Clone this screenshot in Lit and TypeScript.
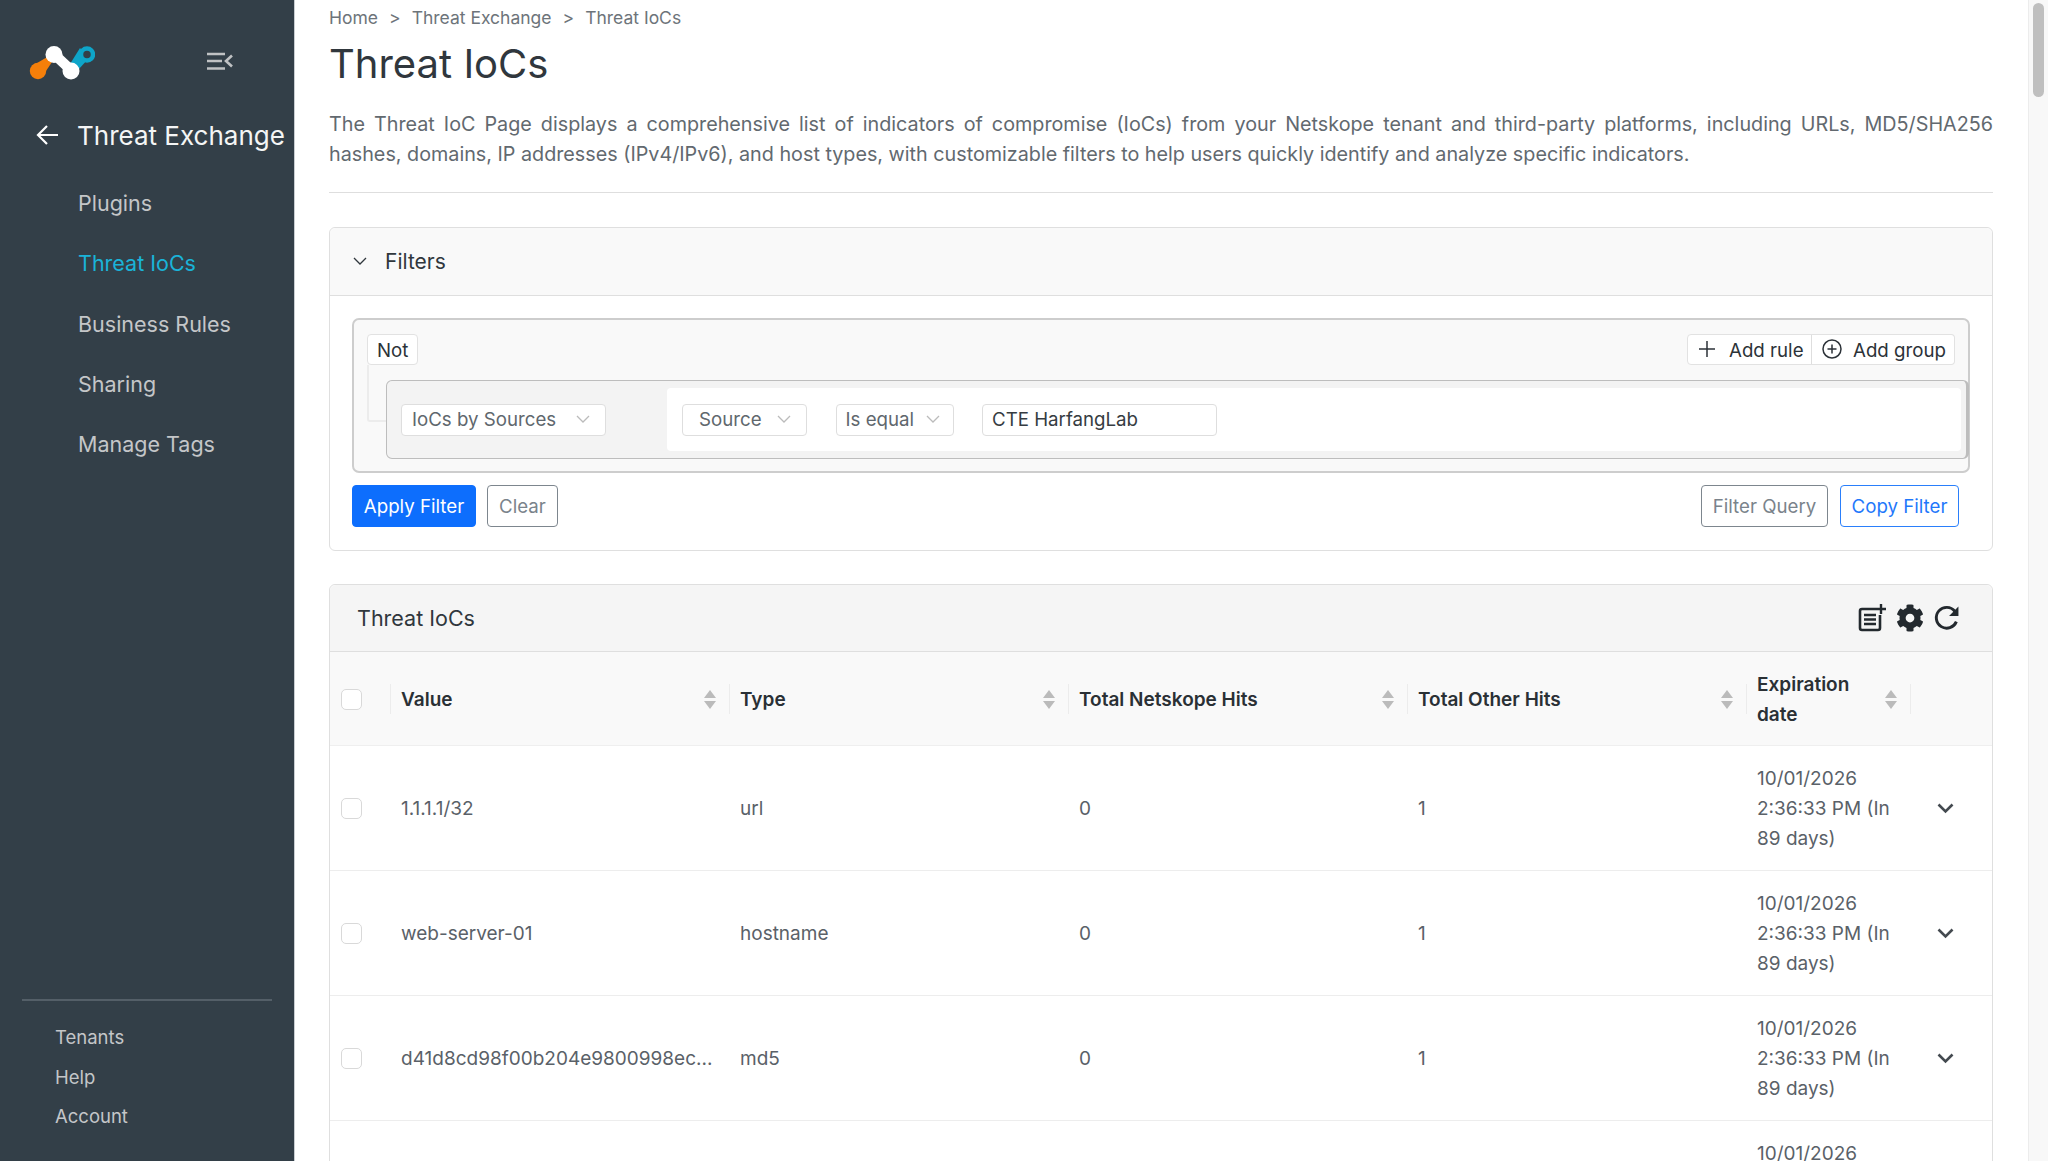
import { LitElement, html, css, svg } from 'lit';
import { customElement } from 'lit/decorators.js';

const NAV = ['Plugins', 'Threat IoCs', 'Business Rules', 'Sharing', 'Manage Tags'];
const FOOT = ['Tenants', 'Help', 'Account'];
const ROWS = [
  { value: '1.1.1.1/32', type: 'url' },
  { value: 'web-server-01', type: 'hostname' },
  { value: 'd41d8cd98f00b204e9800998ec...', type: 'md5' },
  { value: '', type: '' },
];
const COLS = ['Value', 'Type', 'Total Netskope Hits', 'Total Other Hits', 'Expiration date'];

const chevron = svg`<path d="M1 1l6 6 6-6" fill="none" stroke="currentColor" stroke-width="1.3"/>`;
const sortIcon = html`<svg class="sort" width="12" height="20" viewBox="0 0 12 20">
  <path d="M6 0l6 8H0z M0 11h12l-6 8z" fill="#bbb"/>
</svg>`;

@customElement('app-root')
export class AppRoot extends LitElement {
  static styles = css`
    :host {
      display: block;
      height: 1161px;
      overflow: hidden;
      font-family: Inter, 'Noto Sans', sans-serif;
      font-size: 20px;
      color: #5a6168;
    }
    .page { display: flex; height: 1161px; }

    .side {
      width: 295px;
      flex: none;
      box-sizing: border-box;
      background: #333f48;
      border-right: 1px solid #c9ced2;
      display: flex;
      flex-direction: column;
      color: #c4c6c8;
    }
    .brand { display: flex; align-items: center; height: 122px; padding-left: 29px; flex: none; }
    .brand .logo { margin-top: 4px; }
    .brand .toggle { margin-left: 112px; }
    .section { display: flex; align-items: center; height: 26px; padding-left: 36px; color: #f4f5f5; font-size: 26px; white-space: nowrap; }
    .section svg { margin-right: 19px; flex: none; }
    .nav { margin-top: 25px; padding-left: 78px; font-size: 21.5px; }
    .nav div { height: 60.3px; line-height: 60.3px; }
    .nav .on { color: #1ab3d8; }
    .foot { margin: auto 0 0 22px; width: 250px; box-sizing: border-box; border-top: 2px solid #545f68; padding: 17px 0 24px 33px; font-size: 18.5px; }
    .foot div { height: 39.7px; line-height: 39.7px; }

    .main { flex: 1; min-width: 0; padding: 0 35px 0 34px; overflow: hidden; }
    .crumbs { display: flex; gap: 11px; height: 36px; line-height: 36px; font-size: 17.5px; color: #6d747a; }
    h1 { margin: 4px 0 0; font-size: 40px; line-height: 48px; font-weight: 400; color: #30373d; }
    .intro { margin: 21px 0 0; padding-bottom: 23px; border-bottom: 1px solid #dedede; font-size: 19.75px; line-height: 30px; text-align: justify; color: #62696f; }

    .card { border: 1px solid #dfdfdf; border-radius: 6px; margin-top: 33px; background: #fff; }
    .filters { margin-top: 34px; }
    .card-head { display: flex; align-items: center; height: 67px; background: #f9f9f9; border-bottom: 1px solid #dfdfdf; border-radius: 6px 6px 0 0; color: #30373d; font-size: 21px; }
    .filters .card-head { padding-left: 23px; gap: 18px; }
    .filters .card-body { padding: 22px 22px 23px; }

    .box { position: relative; border: 2px solid #cdcdcd; border-radius: 7px; background: #f9f9f9; padding: 14px 0 12px 32px; }
    .box-top { display: flex; justify-content: space-between; align-items: center; height: 31px; margin-left: -19px; padding-right: 13px; }
    .tag { display: flex; align-items: center; background: #fff; border: 1px solid #e2e2e2; border-radius: 4px; height: 31px; box-sizing: border-box; padding: 1px 9px 0; color: #2c3238; font-size: 18.7px; white-space: nowrap; }
    .tag-group { display: flex; }
    .tag-group .tag svg { margin-top: -3px; flex: none; }
    .tag-group .tag:first-child { border-radius: 4px 0 0 4px; width: 125px; padding-left: 11px; gap: 14px; }
    .tag-group .tag:last-child { border-left: 1px solid #dedede; margin-left: -1px; border-radius: 0 4px 4px 0; width: 144px; padding-left: 10px; gap: 11px; }
    .link { position: absolute; left: 13px; top: 45px; width: 18px; height: 55px; border-left: 2px solid #ececec; border-bottom: 2px solid #ececec; border-radius: 0 0 0 3px; }
    .rule { position: relative; margin: 15px -1px 0 0; height: 79px; box-sizing: border-box; display: flex; align-items: center; background: #f3f3f3; border: 1.5px solid #bdbdbd; border-right-width: 3px; border-radius: 6px; padding: 0 5px 0 14px; }
    .select { display: flex; align-items: center; justify-content: space-between; flex: none; height: 32px; box-sizing: border-box; background: #fff; border: 1px solid #dedede; border-radius: 4px; font-size: 18.7px; color: #60676d; white-space: nowrap; }
    .select svg { color: #bbb; flex: none; }
    .rule-first { width: 205px; padding: 0 15px 0 10px; }
    .rule-body { flex: 1; margin-left: 61px; height: 63px; display: flex; align-items: center; background: #fff; border-radius: 4px; padding-left: 15px; gap: 28.5px; }
    .s-source { width: 125px; padding: 0 15px 0 16px; }
    .s-equal { width: 118px; padding: 0 13px 0 9px; }
    .s-input { width: 235px; height: 32px; box-sizing: border-box; border: 1px solid #dedede; border-radius: 4px; padding-left: 9px; display: flex; align-items: center; color: #363c42; font-size: 18.7px; white-space: nowrap; }

    .actions { display: flex; justify-content: space-between; margin-top: 12px; padding-right: 11px; }
    .actions > div { display: flex; }
    .btn { display: flex; align-items: center; justify-content: center; height: 42px; box-sizing: border-box; border-radius: 4px; border: 1.5px solid #7d868e; color: #7a838b; font-size: 18.7px; background: #fff; white-space: nowrap; }
    .btn.apply { width: 124px; background: #0d6efd; border-color: #0d6efd; color: #fff; margin-right: 11px; }
    .btn.clear { width: 71px; }
    .btn.query { width: 127px; margin-right: 12px; }
    .btn.copy { width: 119px; border-color: #2a7ffb; color: #1f78fb; }

    .iocs .card-head { height: 66px; background: #f5f5f5; justify-content: space-between; padding: 0 32px 0 27px; font-size: 21.5px; }
    .tools { display: flex; align-items: center; gap: 10px; color: #23292e; }
    .grid { display: grid; grid-template-columns: 60px 339px 339px 339px 339px 164px 82px; }
    .th { position: relative; display: flex; align-items: center; height: 94px; box-sizing: border-box; background: #f9f9f9; border-bottom: 1px solid #efefef; padding: 2px 11px 0; font-weight: 600; font-size: 19px; line-height: 30px; color: #2a3035; }
    .th .label { flex: 1; }
    .th .sort { flex: none; margin-right: 2px; }
    .th:not(:first-child)::before { content: ''; position: absolute; left: 0; top: 32px; height: 30px; border-left: 1px solid #ececec; }
    .td { display: flex; align-items: center; height: 125px; box-sizing: border-box; border-bottom: 1px solid #ededed; padding: 1px 11px 0; font-size: 19px; line-height: 30px; white-space: nowrap; }
    .td.date { white-space: normal; align-items: flex-start; padding-top: 18px; padding-right: 4px; }
    .td.more { justify-content: flex-start; padding-left: 27px; color: #444a50; }
    .check { width: 21px; height: 21px; box-sizing: border-box; border: 1px solid #d9d9d9; border-radius: 5px; background: #fff; }

    .scroll { width: 20px; flex: none; box-sizing: border-box; background: #f8f8f8; border-left: 1px solid #ececec; padding: 3px 0 0 4px; }
    .thumb { width: 11px; height: 94px; border-radius: 6px; background: #bfbfbf; }
  `;

  render() {
    return html`
      <div class="page">
        <aside class="side">
          <div class="brand">
            <svg class="logo" width="66" height="34" viewBox="0 0 66 34">
              <path d="M3 20L20 10L23 16L13 31z" fill="#f57f0a"/>
              <circle cx="9" cy="25" r="8.200" fill="#f57f0a"/>
              <path d="M51 2L60 12L49 24L41 18z" fill="#0ea5c9"/>
              <circle cx="58" cy="8.500" r="6" fill="#333f48" stroke="#0ea5c9" stroke-width="4.500"/>
              <path d="M26 9L43 25" stroke="#fff" stroke-width="10"/>
              <circle cx="25" cy="8.500" r="8.500" fill="#fff"/>
              <circle cx="42" cy="25" r="8.500" fill="#fff"/>
            </svg>
            <svg class="toggle" width="26" height="20" viewBox="0 0 26 20" fill="none" stroke="#c0c2c4" stroke-width="2.600">
              <path d="M0 3h18M0 10h15M0 17.500h18"/>
              <path d="M25 4.500l-6 5.500 6 5.500"/>
            </svg>
          </div>
          <div class="section">
            <svg width="22" height="22" viewBox="0 0 22 22" fill="none" stroke="#fff" stroke-width="2.200"><path d="M22 11H2M11 2l-9 9 9 9"/></svg>
            Threat Exchange
          </div>
          <div class="nav">
            ${NAV.map((n) => html`<div class=${n === 'Threat IoCs' ? 'on' : ''}>${n}</div>`)}
          </div>
          <div class="foot">${FOOT.map((n) => html`<div>${n}</div>`)}</div>
        </aside>

        <main class="main">
          <div class="crumbs"><span>Home</span><span>&gt;</span><span>Threat Exchange</span><span>&gt;</span><span>Threat IoCs</span></div>
          <h1>Threat IoCs</h1>
          <p class="intro">The Threat IoC Page displays a comprehensive list of indicators of compromise (IoCs) from your Netskope tenant and third-party platforms, including URLs, MD5/SHA256 hashes, domains, IP addresses (IPv4/IPv6), and host types, with customizable filters to help users quickly identify and analyze specific indicators.</p>

          <section class="card filters">
            <div class="card-head">
              <svg width="14" height="9" viewBox="0 0 14 9">${chevron}</svg>
              Filters
            </div>
            <div class="card-body">
              <div class="box">
                <div class="box-top">
                  <div class="tag">Not</div>
                  <div class="tag-group">
                    <div class="tag">
                      <svg width="16" height="16" viewBox="0 0 16 16" fill="none" stroke="currentColor" stroke-width="1.500"><path d="M8 0v16M0 8h16"/></svg>
                      Add rule
                    </div>
                    <div class="tag">
                      <svg width="20" height="20" viewBox="0 0 20 20" fill="none" stroke="currentColor" stroke-width="1.500"><circle cx="10" cy="10" r="9"/><path d="M10 5.500v9M5.500 10h9"/></svg>
                      Add group
                    </div>
                  </div>
                </div>
                <div class="link"></div>
                <div class="rule">
                  <div class="select rule-first">IoCs by Sources <svg width="14" height="9" viewBox="0 0 14 9">${chevron}</svg></div>
                  <div class="rule-body">
                    <div class="select s-source">Source <svg width="14" height="9" viewBox="0 0 14 9">${chevron}</svg></div>
                    <div class="select s-equal">Is equal <svg width="14" height="9" viewBox="0 0 14 9">${chevron}</svg></div>
                    <div class="s-input">CTE HarfangLab</div>
                  </div>
                </div>
              </div>
              <div class="actions">
                <div><div class="btn apply">Apply Filter</div><div class="btn clear">Clear</div></div>
                <div><div class="btn query">Filter Query</div><div class="btn copy">Copy Filter</div></div>
              </div>
            </div>
          </section>

          <section class="card iocs">
            <div class="card-head">
              Threat IoCs
              <div class="tools">
                <svg width="28" height="28" viewBox="0 0 28 28" fill="none" stroke="currentColor">
                  <path d="M18 5H4a2 2 0 0 0-2 2v17a2 2 0 0 0 2 2h16a2 2 0 0 0 2-2V11" stroke-width="2.600"/>
                  <path d="M6 11h12M6 15.500h12M6 20h12" stroke-width="2.600"/>
                  <path d="M23 0v10M18 5h10" stroke-width="2.400"/>
                </svg>
                <svg width="28" height="28" viewBox="0 0 512 512" fill="currentColor"><path d="M487.400 315.700l-42.600-24.600c4.300-23.200 4.300-47 0-70.200l42.600-24.600c4.900-2.800 7.100-8.600 5.500-14-11.100-35.600-30-67.800-54.700-94.600-3.800-4.100-10-5.100-14.800-2.300L380.800 110c-17.900-15.400-38.500-27.300-60.800-35.100V25.800c0-5.600-3.900-10.500-9.400-11.700-36.700-8.200-74.300-7.800-109.200 0-5.500 1.200-9.400 6.100-9.400 11.700V75c-22.200 7.900-42.800 19.800-60.800 35.100L88.700 85.500c-4.900-2.800-11-1.900-14.800 2.300-24.700 26.700-43.600 58.900-54.700 94.600-1.700 5.400.6 11.200 5.500 14L67.300 221c-4.300 23.200-4.300 47 0 70.200l-42.600 24.600c-4.900 2.800-7.100 8.600-5.500 14 11.100 35.600 30 67.800 54.700 94.600 3.800 4.100 10 5.100 14.800 2.300l42.600-24.600c17.900 15.400 38.500 27.300 60.800 35.100v49.200c0 5.600 3.900 10.500 9.400 11.700 36.700 8.200 74.300 7.800 109.200 0 5.500-1.200 9.400-6.100 9.400-11.700v-49.200c22.200-7.900 42.800-19.800 60.800-35.100l42.600 24.600c4.900 2.800 11 1.900 14.800-2.300 24.700-26.700 43.600-58.900 54.700-94.600 1.500-5.500-.7-11.300-5.600-14.100zM256 336c-44.100 0-80-35.900-80-80s35.900-80 80-80 80 35.900 80 80-35.900 80-80 80z"/></svg>
                <svg width="26" height="26" viewBox="0 0 25 25" fill="none" stroke="currentColor" stroke-width="2.800">
                  <path d="M21.500 16a10 10 0 1 1-1.500-10"/>
                  <path d="M23.500 1.500v9h-9z" fill="currentColor" stroke="none"/>
                </svg>
              </div>
            </div>
            <div class="grid">
              <div class="th"><div class="check"></div></div>
              ${COLS.map((c) => html`<div class="th"><span class="label">${c}</span>${sortIcon}</div>`)}
              <div class="th"></div>
              ${ROWS.map((r) => html`
                <div class="td"><div class="check" style=${r.value ? '' : 'display:none'}></div></div>
                <div class="td">${r.value}</div>
                <div class="td">${r.type}</div>
                <div class="td">${r.value ? '0' : ''}</div>
                <div class="td">${r.value ? '1' : ''}</div>
                <div class="td date"><div>10/01/2026 2:36:33 PM (In 89 days)</div></div>
                <div class="td more">
                  ${r.value ? html`<svg width="17" height="11" viewBox="0 0 17 11" fill="none" stroke="currentColor" stroke-width="2.600"><path d="M1.500 1.500l7 7 7-7"/></svg>` : ''}
                </div>
              `)}
            </div>
          </section>
        </main>

        <div class="scroll"><div class="thumb"></div></div>
      </div>
    `;
  }
}

declare global {
  interface HTMLElementTagNameMap {
    'app-root': AppRoot;
  }
}
